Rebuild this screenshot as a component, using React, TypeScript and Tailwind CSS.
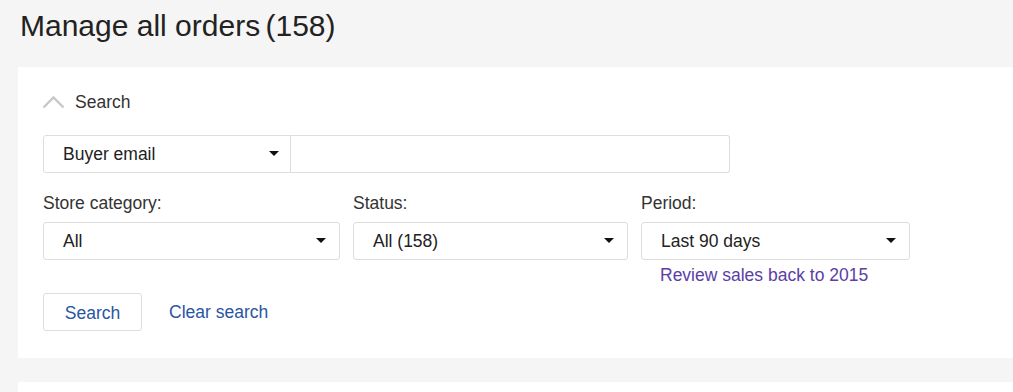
const Caret = () => (
  <svg width="10" height="6" viewBox="0 0 10 6" className="shrink-0">
    <path d="M0 0 L10 0 L5 5 Z" fill="#111" />
  </svg>
);

const Select = ({ value, width }: { value: string; width: string }) => (
  <div
    className={`flex h-[38px] items-center justify-between rounded-[3px] border border-[#dddddd] bg-white pl-[19px] pr-[13px] text-[17.5px] text-[#222] ${width}`}
  >
    <span>{value}</span>
    <Caret />
  </div>
);

const App = () => {
  return (
    <div
      className="min-h-screen overflow-hidden bg-[#f5f5f5] pt-[9px]"
      style={{ fontFamily: '"Liberation Sans", Arial, sans-serif' }}
    >
      {/* Header */}
      <h1 className="ml-[20px] h-[58px] text-[30px] leading-[34px] text-[#222]">
        Manage all orders <span className="-ml-[3px]">(158)</span>
      </h1>

      {/* Search panel */}
      <div className="ml-[18px] h-[291px] bg-white pl-[24px] pt-[22px]">
        <div className="flex items-center gap-[10px] text-[17.5px] text-[#333]">
          <svg width="23" height="14" viewBox="0 0 23 14">
            <polyline points="1.5,12.5 11.5,2.5 21.5,12.5" fill="none" stroke="#c8c8c8" strokeWidth="2.4" />
          </svg>
          <span>Search</span>
        </div>

        <div className="ml-[1px] mt-[20px] flex">
          <div className="flex h-[38px] w-[248px] items-center justify-between rounded-l-[3px] border border-[#dddddd] pl-[19px] pr-[11px] text-[17.5px] text-[#222]">
            <span>Buyer email</span>
            <Caret />
          </div>
          <input className="h-[38px] w-[439px] rounded-r-[3px] border border-l-0 border-[#dddddd] outline-none" />
        </div>

        <div className="ml-[1px] mt-[19px] flex gap-[13px]">
          <div className="flex flex-col">
            <label className="mb-[8px] text-[17.5px] leading-[22px] text-[#333]">Store category:</label>
            <Select value="All" width="w-[297px]" />
          </div>
          <div className="flex flex-col">
            <label className="mb-[8px] text-[17.5px] leading-[22px] text-[#333]">Status:</label>
            <Select value="All (158)" width="w-[275px]" />
          </div>
          <div className="flex flex-col">
            <label className="mb-[8px] text-[17.5px] leading-[22px] text-[#333]">Period:</label>
            <Select value="Last 90 days" width="w-[269px]" />
            <a className="ml-[19px] mt-[4px] text-[17.5px] leading-[22px] text-[#5c3ea6]">
              Review sales back to 2015
            </a>
          </div>
        </div>

        <div className="ml-[1px] mt-[7px] flex items-center">
          <button className="h-[38px] w-[99px] rounded-[3px] border border-[#dddddd] bg-white pt-[1px] text-[17.5px] text-[#2855a3]">
            Search
          </button>
          <a className="ml-[27px] text-[17.5px] text-[#2855a3]">Clear search</a>
        </div>
      </div>

      <div className="ml-[18px] mt-[24px] h-[40px] bg-white" />
    </div>
  );
};

export default App;
